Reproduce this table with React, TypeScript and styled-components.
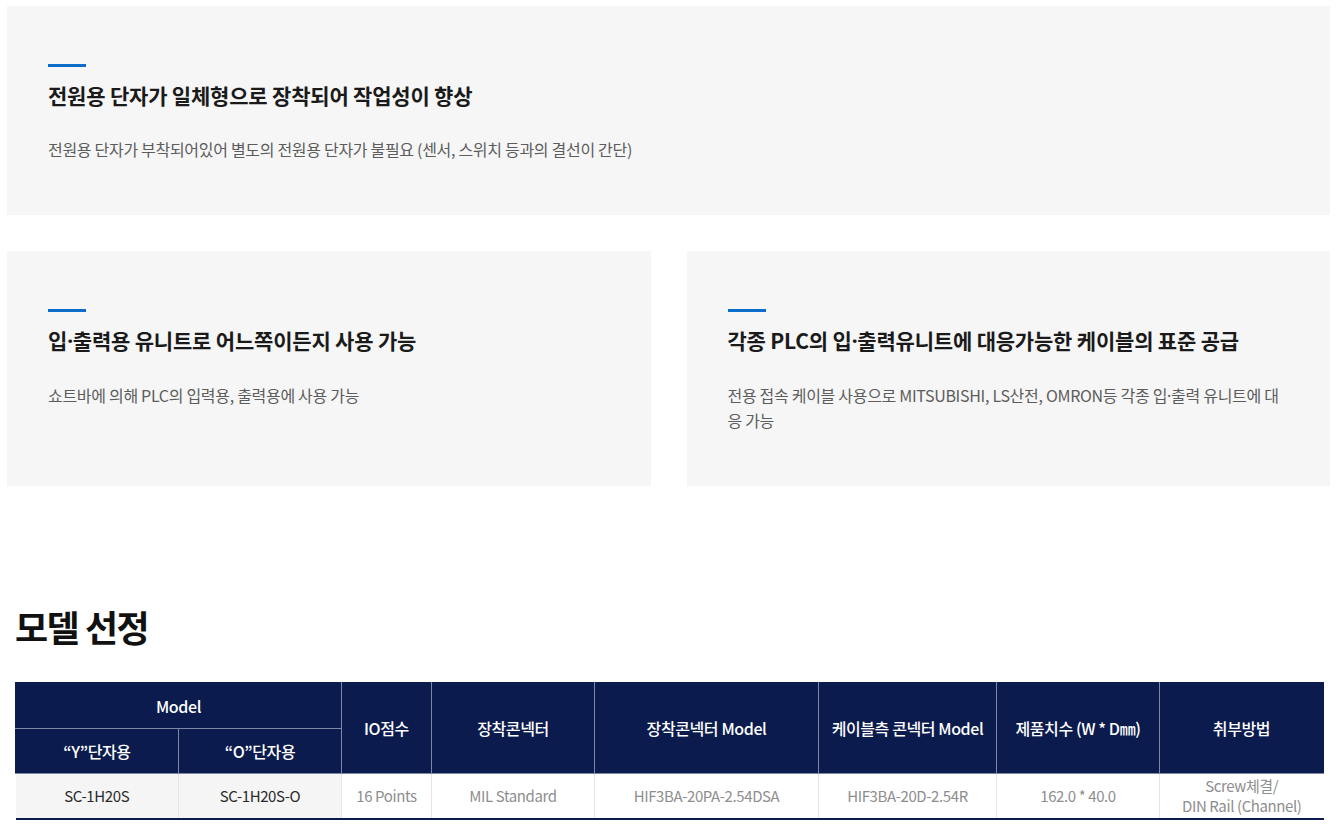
import React from "react";
import styled, { createGlobalStyle } from "styled-components";

const GlobalStyle = createGlobalStyle`
  html, body { margin: 0; padding: 0; background: #fff; }
  body {
    font-family: "Noto Sans CJK KR", "Noto Sans", sans-serif;
    color: #222;
  }
`;

const Page = styled.div`
  padding: 6px 14px 0 7px;
  width: 1344px;
  box-sizing: border-box;
`;

const Card = styled.div`
  background: #f6f6f6;
  box-sizing: border-box;
  padding: 58px 40px 54px 41px;
`;

const Bar = styled.div`
  width: 38px;
  height: 3px;
  background: #0a6ccb;
`;

const CardTitle = styled.h3`
  margin: 13px 0 0;
  font-size: 21px;
  line-height: 30px;
  font-weight: 700;
  letter-spacing: -0.2px;
  color: #1a1a1a;
`;

const CardText = styled.p`
  margin: 27px 0 0;
  font-size: 16px;
  line-height: 24px;
  font-weight: 400;
  letter-spacing: -0.3px;
  color: #5c5c5c;
`;

const Dot = styled.span`
  font-family: "Noto Sans", sans-serif;
`;

const Grid = styled.div`
  display: grid;
  grid-template-columns: 1fr 1fr;
  gap: 36px;
  margin-top: 36px;
`;

const Heading = styled.h2`
  margin: 115px 0 0 8px;
  font-size: 36px;
  line-height: 50px;
  font-weight: 700;
  letter-spacing: -1.5px;
  color: #111;
`;

const Table = styled.table`
  margin: 31px 0 0 8px;
  width: 1308px;
  border-collapse: collapse;
  table-layout: fixed;
  border-bottom: 2px solid #0b1b4d;
`;

const Col = styled.col<{ $w: number }>`
  width: ${(p) => p.$w}px;
`;

const Th = styled.th<{ $h?: number }>`
  background: #0b1b4d;
  color: #fff;
  font-size: 16px;
  font-weight: 500;
  letter-spacing: -0.4px;
  height: ${(p) => p.$h ?? 44}px;
  padding: 0;
  border: 1px solid #7d87a6;
  border-top-color: #0b1b4d;
  text-align: center;
  &:first-child { border-left-color: #0b1b4d; }
  &:last-child { border-right-color: #0b1b4d; }
`;

const Td = styled.td<{ $shade?: boolean }>`
  background: ${(p) => (p.$shade ? "#f5f5f5" : "#fff")};
  color: ${(p) => (p.$shade ? "#2a2a2a" : "#8e8e8e")};
  font-size: 15px;
  font-weight: 400;
  letter-spacing: -0.4px;
  line-height: 20px;
  height: 44px;
  padding: 0;
  border-left: 1px solid #e6e6e6;
  text-align: center;
  &:first-child { border-left: none; }
`;

const features = [
  {
    title: (
      <>
        입<Dot>·</Dot>출력용 유니트로 어느쪽이든지 사용 가능
      </>
    ),
    text: "쇼트바에 의해 PLC의 입력용, 출력용에 사용 가능",
  },
  {
    title: (
      <>
        각종 PLC의 입<Dot>·</Dot>출력유니트에 대응가능한 케이블의 표준 공급
      </>
    ),
    text: (
      <>
        전용 접속 케이블 사용으로 MITSUBISHI, LS산전, OMRON등 각종 입<Dot>·</Dot>출력 유니트에 대응 가능
      </>
    ),
  },
];

const widths = [163, 163, 90, 163, 224, 178, 163, 164];

export default function App() {
  return (
    <Page>
      <GlobalStyle />
      <Card>
        <Bar />
        <CardTitle>전원용 단자가 일체형으로 장착되어 작업성이 향상</CardTitle>
        <CardText>
          전원용 단자가 부착되어있어 별도의 전원용 단자가 불필요 (센서, 스위치 등과의 결선이 간단)
        </CardText>
      </Card>
      <Grid>
        {features.map((f, i) => (
          <Card key={i}>
            <Bar />
            <CardTitle>{f.title}</CardTitle>
            <CardText>{f.text}</CardText>
          </Card>
        ))}
      </Grid>
      <Heading>모델 선정</Heading>
      <Table>
        <colgroup>
          {widths.map((w, i) => (
            <Col key={i} $w={w} />
          ))}
        </colgroup>
        <thead>
          <tr>
            <Th colSpan={2} $h={45}>Model</Th>
            <Th rowSpan={2}>IO점수</Th>
            <Th rowSpan={2}>장착콘넥터</Th>
            <Th rowSpan={2}>장착콘넥터 Model</Th>
            <Th rowSpan={2}>케이블측 콘넥터 Model</Th>
            <Th rowSpan={2}>제품치수 (W * D㎜)</Th>
            <Th rowSpan={2}>취부방법</Th>
          </tr>
          <tr>
            <Th>“Y”단자용</Th>
            <Th>“O”단자용</Th>
          </tr>
        </thead>
        <tbody>
          <tr>
            <Td $shade>SC-1H20S</Td>
            <Td $shade>SC-1H20S-O</Td>
            <Td>16 Points</Td>
            <Td>MIL Standard</Td>
            <Td>HIF3BA-20PA-2.54DSA</Td>
            <Td>HIF3BA-20D-2.54R</Td>
            <Td>162.0 * 40.0</Td>
            <Td>
              Screw체결/
              <br />
              DIN Rail (Channel)
            </Td>
          </tr>
        </tbody>
      </Table>
    </Page>
  );
}
